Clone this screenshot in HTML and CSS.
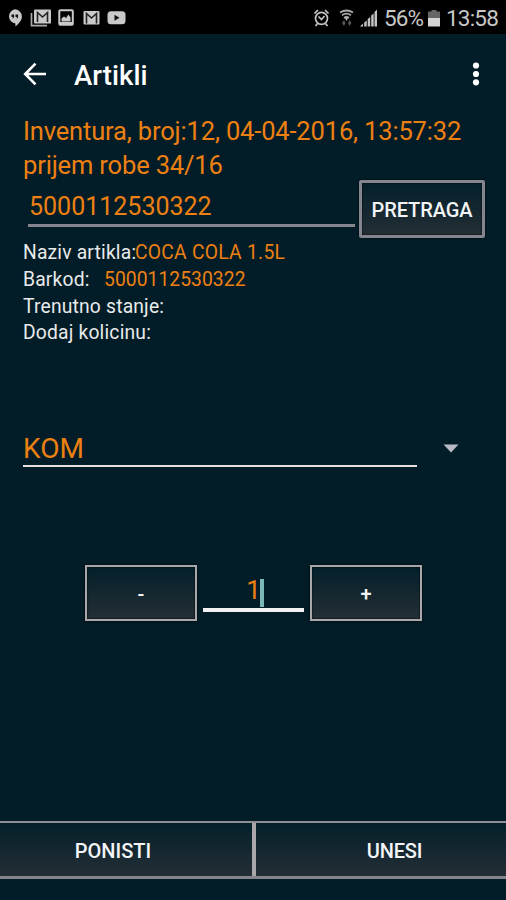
FILE: index.html
```html
<!DOCTYPE html>
<html lang="hr">
<head>
<meta charset="utf-8">
<title>Artikli</title>
<link rel="stylesheet" href="styles.css">
</head>
<body>
<div class="screen">
  <div class="status">
    <svg class="notif" width="130" height="34" viewBox="0 0 130 34">
      <path fill="#c9c9c9" d="M14.700 9.300a7.200 7.200 0 0 1 7.200 7.200c0 4-3.500 7.500-6.500 10v-3a7.200 7.200 0 0 1-.7-14.200z"/>
      <path fill="#111" d="M11.500 14.500h2.600v2.500l-1.300 2v-2h-1.300zM15.500 14.500h2.600v2.500l-1.300 2v-2h-1.300z"/>
      <path fill="none" stroke="#aaa" stroke-width="1.700" d="M31.500 13v12.700H47"/>
      <rect x="34" y="9.500" width="17" height="14" rx="1" fill="#c9c9c9"/>
      <path fill="none" stroke="#222" stroke-width="1.600" d="M37.500 22V12.500l5 4.500 5-4.500V22"/>
      <rect x="59.300" y="10.300" width="13.500" height="14.500" rx="1" fill="none" stroke="#c9c9c9" stroke-width="2"/>
      <path fill="#c9c9c9" d="M61.500 21.500v-3l2.500-2 2 1.500 2.500-3.500 2 3v4z"/>
      <path fill="#c9c9c9" d="M59 22h14v3H59z"/>
      <rect x="83.500" y="11" width="16" height="13.500" rx="1" fill="#c9c9c9"/>
      <path fill="none" stroke="#222" stroke-width="1.600" d="M86.500 23.500v-10l5 4.500 5-4.500v10"/>
      <rect x="107.500" y="11.300" width="18" height="13" rx="3.500" fill="#c9c9c9"/>
      <path fill="#111" d="M114.500 14.800v6l5-3z"/>
    </svg>
    <svg class="signals" width="70" height="34" viewBox="310 0 70 34">
      <g fill="none" stroke="#c4c4c4" stroke-width="1.700">
        <circle cx="321.500" cy="18.300" r="6"/>
        <path d="M314.500 13.500l3.500-3.500M328.500 13.500l-3.500-3.500M317.500 23.500l-2 2.500M325.500 23.500l2 2.500M318.500 16.500l3 3 3-3.500"/>
      </g>
      <g fill="none" stroke="#aaa" stroke-width="1.800">
        <path d="M340 12.500q6.500-4 13 0M342 15.200q4.500-3 9 0M344 18q2.500-2 5 0"/>
      </g>
      <path fill="#bbb" d="M345 18h3l-1.500 3z"/>
      <path fill="#555" d="M342 23l2-3 1.500 3-1.500 3zM348 23l1.500-3 2 3-2 3z"/>
      <path fill="#c4c4c4" d="M360 26.500l3-3v3zM364.200 22.500l2.500-2v6h-2.500zM367.700 19l2.500-2v9.500h-2.500zM371.200 15.500l2.500-2v13h-2.500zM374.500 12l2.500-2.500v17h-2.500z"/>
    </svg>
    <span class="percent">56%</span>
    <svg class="battery" width="12" height="34" viewBox="0 0 12 34">
      <path fill="#666" d="M3.500 10h5v1.500H12V18H0v-6.500h3.500z"/><path fill="#d5d5d5" d="M0 18h12v8.500H0z"/>
    </svg>
    <span class="clock">13:58</span>
  </div>
  <header class="bar">
    <svg width="24" height="24" viewBox="0 0 24 24" fill="none" stroke="#fff" stroke-width="2.600"><path d="M23 12H2.500M12.500 1.700L2.200 12l10.300 10.300"/></svg>
    <h1>Artikli</h1>
    <svg class="more" width="8" height="24" viewBox="0 0 8 24" fill="#fff"><circle cx="4" cy="3.500" r="3.100"/><circle cx="4" cy="12" r="3.100"/><circle cx="4" cy="20.300" r="3.100"/></svg>
  </header>
  <main>
    <p class="doc">Inventura, broj:12, 04-04-2016, 13:57:32<br>prijem robe 34/16</p>
    <div class="search">
      <div class="field">5000112530322</div>
      <button class="btn find">PRETRAGA</button>
    </div>
    <div class="info">
      <div><span class="name">Naziv artikla:</span><b class="item">COCA COLA 1.5L</b></div>
      <div><span class="key">Barkod:</span><b>5000112530322</b></div>
      <div>Trenutno stanje:</div>
      <div>Dodaj kolicinu:</div>
    </div>
    <div class="unit">
      <div class="unit-value">KOM</div>
      <svg width="16" height="9" viewBox="0 0 16 9"><path fill="#b9bac4" d="M.5.500h15L8 8.500z"/></svg>
    </div>
    <div class="stepper">
      <button class="btn step">-</button>
      <div class="qty"><span>1</span><i></i></div>
      <button class="btn step">+</button>
    </div>
  </main>
  <footer>
    <button class="action cancel">PONISTI</button>
    <button class="action confirm">UNESI</button>
  </footer>
</div>
</body>
</html>
```
FILE: styles.css
```css
* { box-sizing: border-box; }
body { margin: 0; background: #021d27; }
.screen {
  width: 506px;
  height: 900px;
  display: flex;
  flex-direction: column;
  overflow: hidden;
  background: #021d27;
  color: #e9eaeb;
  font-family: Roboto, "Liberation Sans", sans-serif;
}
svg { display: block; flex: none; }
.status {
  display: flex;
  height: 34px;
  background: #000;
  color: #c8c8c8;
  font-size: 22.500px;
  line-height: 37px;
  white-space: nowrap;
}
.signals { margin-left: 180px; }
.percent { width: 47px; padding-left: 4px; letter-spacing: -.9px; }
.battery { margin-left: 1px; }
.clock { margin-left: 6px; letter-spacing: -.8px; }
.bar { display: flex; align-items: center; height: 80px; padding: 0 26px 0 23px; }
h1 { margin: 2px 0 0 27px; font-size: 27.500px; font-weight: 500; color: #fff; letter-spacing: .05px; }
.more { margin-left: auto; }
main { flex: 1; padding: 0 21px 0 23px; }
.doc { margin: 0; height: 68px; font-size: 25.500px; letter-spacing: -.16px; line-height: 34px; color: #ed8013; white-space: nowrap; }
.search { display: flex; height: 57px; margin-top: -2px; }
.field {
  width: 327px;
  height: 47px;
  margin-left: 5px;
  border-bottom: 3px solid #85858f;
  padding-left: 1px;
  font-size: 25px;
  line-height: 54px;
  color: #ed8013;
}
.btn, .action {
  padding: 0;
  font: 500 20px Roboto, "Liberation Sans", sans-serif;
  color: #f2f4f6;
  background: linear-gradient(#04202b, #242e35);
}
.btn { border: 2px solid #aaa7ab; box-shadow: 0 0 2px #000, inset 0 0 2px #000; }
.find { width: 126px; height: 58px; margin-left: 4px; padding-top: 2px; border: 3px solid #85858f; border-radius: 2px; letter-spacing: -.1px; }
.info { margin-top: 3px; font-size: 19.300px; line-height: 26.800px; letter-spacing: .18px; white-space: nowrap; }
.info div { display: flex; }
.info b { font-weight: 400; color: #ed8013; letter-spacing: .05px; }
.info .item { letter-spacing: .25px; }
.name { width: 112px; }
.key { width: 81px; }
.unit { display: flex; align-items: flex-start; margin-top: 82px; height: 38px; }
.unit-value {
  width: 394px;
  height: 38px;
  border-bottom: 2px solid #e6ded9;
  font-size: 28px;
  line-height: 40px;
  color: #ed8013;
}
.unit svg { margin: 15px 0 0 26px; }
.stepper { display: flex; gap: 6px; margin: 98px 0 0 62px; }
.step { width: 112px; height: 56px; padding-top: 1px; }
.qty {
  display: flex;
  justify-content: center;
  width: 101px;
  height: 47px;
  padding-left: 3px;
  border-bottom: 4px solid #f2f2f2;
  font-size: 26px;
  line-height: 50px;
  color: #ed8013;
}
.qty span { letter-spacing: -1px; }
.qty i { width: 4px; height: 28px; margin-top: 14px; background: #7ab8b5; }
footer {
  display: flex;
  height: 58px;
  margin-bottom: 21px;
  border-top: 2px solid #918f93;
  border-bottom: 3px solid #85858f;
}
.action { border: 0; padding-top: 2px; }
.cancel { width: 252px; padding-right: 26px; }
.confirm { width: 254px; padding-left: 27px; border-left: 4px solid #aaa7ab; letter-spacing: -.2px; }
```
